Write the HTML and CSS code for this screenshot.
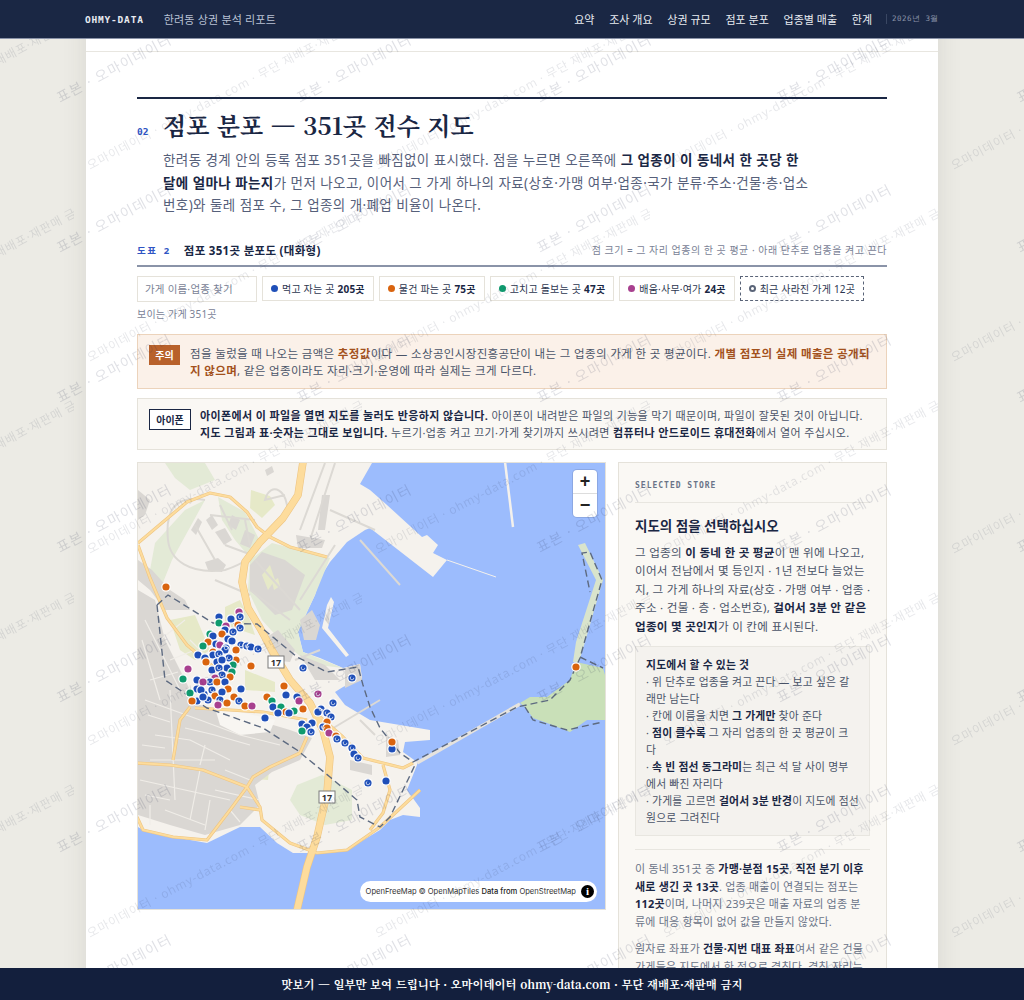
FILE: index.html
```html
<!DOCTYPE html>
<html lang="ko">
<head>
  <meta charset="UTF-8" />
  <meta name="viewport" content="width=device-width, initial-scale=1.0" />
  <title>한려동 상권 분석 리포트</title>
  <link rel="stylesheet" href="styles.css">
</head>
<body>
  <header class="topbar">
    <div class="topbar-left">
      <span class="brand">OHMY-DATA</span>
      <span class="report-name">한려동 상권 분석 리포트</span>
    </div>
    <nav class="topnav">
      <a href="#summary">요약</a>
      <a href="#survey">조사 개요</a>
      <a href="#scale">상권 규모</a>
      <a href="#stores">점포 분포</a>
      <a href="#sales">업종별 매출</a>
      <a href="#limits">한계</a>
      <span class="issue">2026년 3월</span>
    </nav>
  </header>

  <div class="page">
    <div class="prev-section"></div>

    <section id="stores" class="section">
      <div class="section-head">
        <span class="section-no">02</span>
        <h1>점포 분포 — 351곳 전수 지도</h1>
      </div>
      <p class="lead">한려동 경계 안의 등록 점포 351곳을 빠짐없이 표시했다. 점을 누르면 오른쪽에 <b>그 업종이 이 동네서 한 곳당 한 달에 얼마나 파는지</b>가 먼저 나오고, 이어서 그 가게 하나의 자료(상호·가맹 여부·업종·국가 분류·주소·건물·층·업소번호)와 둘레 점포 수, 그 업종의 개·폐업 비율이 나온다.</p>

      <div class="fig-head">
        <div class="fig-title"><span class="fig-no">도표 2</span><strong>점포 351곳 분포도 (대화형)</strong></div>
        <span class="fig-note">점 크기 = 그 자리 업종의 한 곳 평균 · 아래 단추로 업종을 켜고 끈다</span>
      </div>

      <div class="filters">
        <input class="search" type="text" placeholder="가게 이름·업종 찾기" />
        <button class="chip"><i class="dot dot-food"></i>먹고 자는 곳 <b>205곳</b></button>
        <button class="chip"><i class="dot dot-shop"></i>물건 파는 곳 <b>75곳</b></button>
        <button class="chip"><i class="dot dot-care"></i>고치고 돌보는 곳 <b>47곳</b></button>
        <button class="chip"><i class="dot dot-office"></i>배움·사무·여가 <b>24곳</b></button>
        <button class="chip chip-closed"><i class="dot dot-closed"></i>최근 사라진 가게 12곳</button>
      </div>
      <p class="visible-count">보이는 가게 351곳</p>

      <div class="notice notice-warn">
        <span class="badge badge-warn">주의</span>
        <p>점을 눌렀을 때 나오는 금액은 <b>추정값</b>이다 — 소상공인시장진흥공단이 내는 그 업종의 가게 한 곳 평균이다. <b>개별 점포의 실제 매출은 공개되지 않으며</b>, 같은 업종이라도 자리·크기·운영에 따라 실제는 크게 다르다.</p>
      </div>
      <div class="notice notice-phone">
        <span class="badge badge-phone">아이폰</span>
        <p><b>아이폰에서 이 파일을 열면 지도를 눌러도 반응하지 않습니다.</b> 아이폰이 내려받은 파일의 기능을 막기 때문이며, 파일이 잘못된 것이 아닙니다. <b>지도 그림과 표·숫자는 그대로 보입니다.</b> 누르기·업종 켜고 끄기·가게 찾기까지 쓰시려면 <b>컴퓨터나 안드로이드 휴대전화</b>에서 열어 주십시오.</p>
      </div>

      <div class="map-row">
        <div class="map">
          <svg class="map-svg" viewBox="138 463 467 446" preserveAspectRatio="none" aria-hidden="true">
            <rect class="water" x="138" y="463" width="467" height="446" />
            <polygon class="land" points="138,463 372,463 360,484 370,490 387,505 422,537 427,535 438,545 433,553 447,560 433,577 370,528 365,530 347,542 330,562 320,578 315,595 307,612 298,632 303,652 320,658 343,668 360,664 362,678 343,687 335,692 345,705 370,720 430,730 430,740 405,742 403,752 417,762 417,765 407,790 420,808 420,817 403,815 390,820 380,830 347,850 317,853 293,853 277,843 260,827 240,827 207,843 173,837 143,830 138,827" />
            <polygon class="green-pale" points="250,560 272,543 330,558 315,595 307,612 298,632 303,652 343,668 310,664 280,640 262,620 248,590" />
            <polygon class="green-pale" points="155,543 185,510 205,500 172,560 160,590 150,570" />
            <polygon class="green-pale" points="165,463 205,463 215,480 190,490 175,478" />
            <polygon class="green-pale" points="218,497 245,512 262,545 252,560 235,540 222,520" />
            <polygon class="green-pale" points="297,785 322,775 352,790 352,820 325,825 300,815 290,800" />
            <polygon class="green-soft" points="251,490 270,496 275,505 262,518 250,508" />
            <polygon class="green-soft" points="225,607 240,600 250,620 255,635 225,625" />
            <polygon class="green-soft" points="170,620 195,615 210,650 195,660 180,650" />
            <polygon class="green-soft" points="222,740 265,735 272,745 268,780 240,778 225,762" />
            <polygon class="green-soft" points="245,670 275,682 275,692 245,690" />

            <g class="resident">
              <polygon points="138,590 155,600 165,640 190,690 200,705 240,715 290,730 312,738 300,760 272,772 255,785 260,805 240,825 205,835 170,825 138,815" />
              <polygon points="138,490 150,500 145,515 138,520" />
              <polygon points="138,560 152,570 170,590 185,600 190,610 165,610 150,590 138,580" />
              <polygon points="250,565 262,552 285,560 305,575 292,610 275,615 250,590" />
              <polygon points="191,530 198,518 202,522 196,535" />
              <polygon points="206,520 212,515 218,525 212,530" />
              <polygon points="215,532 225,528 232,540 224,545" />
              <polygon points="232,515 240,520 236,530 228,525" />
              <polygon points="245,530 255,535 250,548 240,544" />
              <polygon points="205,562 218,558 226,565 222,572 208,570" />
              <polygon points="262,640 278,630 295,650 290,662 272,660" />
              <polygon points="300,655 325,665 340,680 315,680" />
              <polygon points="345,668 360,664 362,680 345,688" />
              <polygon points="350,760 372,765 372,775 350,770" />
              <polygon points="386,736 398,740 400,755 386,757" />
              <polygon points="265,735 285,735 300,745 296,757 270,765" />
              <polygon points="300,620 312,610 320,625 316,640 304,640" />
              <polygon points="325,530 330,495 322,495 318,530" />
              <polygon points="296,535 325,540 322,548 298,548" />
              <polygon points="265,470 272,466 274,472 267,476" />
            </g>
            <polygon class="green-soft" points="262,575 270,565 275,580 268,590" />
            <polygon class="green-soft" points="272,582 278,578 280,586 274,590" />
            <polygon class="pale-yellow" points="215,708 240,712 275,720 270,732 240,735 220,725" />

            <g class="streets">
              <path d="M145 700 L200 720 L240 735 L280 745 M155 735 L190 740 L230 760 M170 690 L175 800 M150 760 L215 760 M200 770 L190 820 M215 790 L260 800 M140 780 L230 800 M165 810 L205 825" />
              <path d="M145 620 L165 660 L180 690 M160 640 L185 620 M190 640 L210 660 M170 660 L195 650" />
              <path d="M142 640 L160 700 M150 680 L178 672 M148 715 L170 722 M142 745 L165 748 M185 728 L215 735 L250 745 M205 745 L200 765 M145 795 L170 800 M225 770 L250 780 M150 805 L150 825 M210 800 L205 830 M230 810 L240 822" />
            </g>
            <g class="minor-roads">
              <path d="M168 540 C165 510 175 495 205 500 M168 540 C170 560 190 575 225 570 C240 565 260 555 262 540 M210 515 L255 520 M220 505 L232 530 M245 520 L250 545 M225 545 L252 555 M195 525 L215 560 M285 495 L265 500 C270 480 290 490 287 515" />
              <path d="M335 463 L310 540 M325 463 L300 530 M330 510 L375 530 M255 560 L300 610 M250 590 L290 620 M300 600 L335 545 M215 580 L250 595 M295 660 L320 650 M360 540 L400 585" />
              <path d="M330 730 L380 700 M360 720 L375 735" />
            </g>

            <g class="road-casing">
              <path class="road-thin" d="M138 543 L163 522 L187 502 L210 493 L230 497 L247 512 L257 527 L270 537 L290 547 L327 557" />
              <path class="road-thin" d="M138 545 L150 578 L167 618 L187 645 L207 662 L222 672 M190 707 L180 720 L173 760" />
              <path class="road-thin" d="M195 708 L230 710 L263 712 L307 720 M320 717 L343 737 L363 758 L383 763 L403 768 L413 763" />
              <path class="road-thin" d="M137 763 L170 765 L203 770 L247 787 L260 807 L262 820 L290 843 L317 853 L347 850 L380 827 L420 790" />
              <path class="road-thin" d="M247 787 L230 810 L207 840 L173 837 L143 830 L137 817 M307 737 L300 753 L270 767 L253 777 L247 787 M240 807 L260 810 M383 765 L390 790 L383 813 L370 830" />
              <path class="road-wide" d="M303 462 L298 495 L283 518 L260 542 L245 562 L242 582 L248 608 L260 628 L273 652 L290 680 L310 703 L323 730 L330 757 L327 793 L317 837 L307 867 L297 910" />
            </g>
            <g class="road-fill">
              <path class="road-thin" d="M138 543 L163 522 L187 502 L210 493 L230 497 L247 512 L257 527 L270 537 L290 547 L327 557" />
              <path class="road-thin" d="M138 545 L150 578 L167 618 L187 645 L207 662 L222 672 M190 707 L180 720 L173 760" />
              <path class="road-thin" d="M195 708 L230 710 L263 712 L307 720 M320 717 L343 737 L363 758 L383 763 L403 768 L413 763" />
              <path class="road-thin" d="M137 763 L170 765 L203 770 L247 787 L260 807 L262 820 L290 843 L317 853 L347 850 L380 827 L420 790" />
              <path class="road-thin" d="M247 787 L230 810 L207 840 L173 837 L143 830 L137 817 M307 737 L300 753 L270 767 L253 777 L247 787 M240 807 L260 810 M383 765 L390 790 L383 813 L370 830" />
              <path class="road-wide" d="M303 462 L298 495 L283 518 L260 542 L245 562 L242 582 L248 608 L260 628 L273 652 L290 680 L310 703 L323 730 L330 757 L327 793 L317 837 L307 867 L297 910" />
            </g>

            <path class="pier" d="M505 462 L513 527" />
            <path class="pier-thin" d="M447 560 L496 577" />
            <polygon class="land" points="331,597 334,602 328,628 349,655 346,657 322,628 327,605" />
            <polygon class="resident-fill" points="330,605 329,625 325,620" />
            <polygon class="strip" points="578,545 585,543 603,580 585,642 579,662 573,662 576,642 596,580" />
            <polygon class="green-land" points="576,662 603,668 605,675 605,720 587,720 570,732 547,723 533,718 525,707 520,703 530,697 547,697 570,680" />
            <path class="bridge" d="M417 763 L520 704" />

            <path class="boundary" d="M157 605 L168 595 L213 623 L257 624 L297 657 L327 672 L358 667 L363 685 L370 707 L380 728 L400 753 L413 762 L517 707 L550 700 L570 680 L580 658 L590 622 L602 580 L590 552 L582 553 L590 592 M157 605 L165 680 L207 708 L263 728 L297 750 L330 777 L357 800 L360 817 L380 827 L390 817 L403 790 L415 765 M525 707 L533 720 L567 730 L603 722 M580 657 L603 668" />

            <g class="shield"><rect x="268" y="656" width="16" height="12" /><text x="276" y="665.5">17</text></g>
            <g class="shield"><rect x="319" y="791" width="16" height="12" /><text x="327" y="800.5">17</text></g>

            <g class="stores">
              <circle class="s-office" cx="239" cy="612" r="4" /><circle class="s-food" cx="240" cy="617" r="4" />
              <circle class="s-food" cx="219" cy="617" r="4.5" /><circle class="s-care" cx="219" cy="623" r="3.5" /><circle class="s-food" cx="231" cy="619" r="4" />
              <circle class="s-office" cx="226" cy="626" r="4" /><circle class="s-shop" cx="238" cy="625" r="4" /><circle class="s-food" cx="240" cy="628" r="4" />
              <circle class="s-food" cx="225" cy="630" r="4.5" /><circle class="s-food" cx="233" cy="632" r="4" /><circle class="s-care" cx="210" cy="634" r="4.5" />
              <circle class="s-food" cx="213" cy="636" r="4" /><circle class="s-shop" cx="222" cy="634" r="3.5" /><circle class="s-food" cx="228" cy="639" r="4" /><circle class="s-shop" cx="208" cy="642" r="4.5" />
              <circle class="s-food" cx="232" cy="641" r="4.5" /><circle class="s-food" cx="216" cy="644" r="4" /><circle class="s-office" cx="220" cy="645" r="4.5" /><circle class="s-food" cx="241" cy="645" r="4" />
              <circle class="s-food" cx="247" cy="646" r="4" /><circle class="s-food" cx="251" cy="647" r="4" /><circle class="s-food" cx="258" cy="649" r="4" />
              <circle class="s-care" cx="203" cy="646" r="4" /><circle class="s-food" cx="226" cy="648" r="4" /><circle class="s-shop" cx="236" cy="650" r="4.5" /><circle class="s-shop" cx="213" cy="652" r="4" />
              <circle class="s-food" cx="198" cy="655" r="4.5" /><circle class="s-food" cx="213" cy="655" r="4" /><circle class="s-food" cx="225" cy="650" r="4" /><circle class="s-food" cx="205" cy="658" r="4" /><circle class="s-food" cx="219" cy="654" r="4" />
              <circle class="s-shop" cx="236" cy="660" r="4" /><circle class="s-food" cx="229" cy="658" r="4" /><circle class="s-food" cx="217" cy="662" r="4" /><circle class="s-care" cx="233" cy="665" r="4" />
              <circle class="s-shop" cx="251" cy="666" r="4.5" /><circle class="s-food" cx="227" cy="668" r="4.5" /><circle class="s-food" cx="212" cy="670" r="4" /><circle class="s-food" cx="219" cy="668" r="4" />
              <circle class="s-shop" cx="206" cy="662" r="3.5" /><circle class="s-food" cx="222" cy="660" r="4" /><circle class="s-office" cx="188" cy="669" r="4" />
              <circle class="s-care" cx="232" cy="672" r="4" /><circle class="s-shop" cx="230" cy="677" r="4" /><circle class="s-food" cx="222" cy="675" r="4" /><circle class="s-office" cx="215" cy="678" r="4" />
              <circle class="s-care" cx="183" cy="679" r="4" /><circle class="s-food" cx="197" cy="680" r="4.5" /><circle class="s-food" cx="210" cy="682" r="4" />
              <circle class="s-shop" cx="217" cy="682" r="4" /><circle class="s-office" cx="203" cy="682" r="3.5" /><circle class="s-food" cx="225" cy="682" r="4" />
              <circle class="s-shop" cx="228" cy="689" r="4.5" /><circle class="s-food" cx="241" cy="689" r="4" /><circle class="s-food" cx="212" cy="690" r="4" />
              <circle class="s-food" cx="197" cy="689" r="4" /><circle class="s-care" cx="190" cy="693" r="4" /><circle class="s-food" cx="204" cy="694" r="4" />
              <circle class="s-shop" cx="234" cy="697" r="4.5" /><circle class="s-shop" cx="215" cy="696" r="4" /><circle class="s-food" cx="222" cy="692" r="3.5" /><circle class="s-food" cx="201" cy="690" r="4" />
              <circle class="s-food" cx="197" cy="701" r="4.5" /><circle class="s-food" cx="208" cy="700" r="4" /><circle class="s-food" cx="220" cy="700" r="4" /><circle class="s-food" cx="203" cy="697" r="4" />
              <circle class="s-food" cx="239" cy="701" r="4" /><circle class="s-shop" cx="227" cy="703" r="4.5" /><circle class="s-shop" cx="192" cy="701" r="3.5" />
              <circle class="s-office" cx="218" cy="705" r="4" /><circle class="s-shop" cx="245" cy="706" r="4.5" /><circle class="s-office" cx="252" cy="706" r="4" />
              <circle class="s-shop" cx="166" cy="587" r="4" /><circle class="s-food" cx="303" cy="668" r="4" /><circle class="s-food" cx="352" cy="678" r="4" />
              <circle class="s-shop" cx="284" cy="686" r="4" /><circle class="s-food" cx="286" cy="695" r="4" /><circle class="s-food" cx="297" cy="697" r="4" />
              <circle class="s-shop" cx="267" cy="697" r="4" /><circle class="s-care" cx="272" cy="701" r="4" /><circle class="s-office" cx="299" cy="701" r="4" />
              <circle class="s-office" cx="318" cy="694" r="4" /><circle class="s-food" cx="333" cy="703" r="3.5" /><circle class="s-food" cx="273" cy="707" r="4" />
              <circle class="s-care" cx="281" cy="707" r="4" /><circle class="s-shop" cx="286" cy="712" r="4" /><circle class="s-care" cx="294" cy="711" r="4" />
              <circle class="s-food" cx="289" cy="713" r="4" /><circle class="s-shop" cx="303" cy="709" r="4" /><circle class="s-food" cx="278" cy="713" r="3.5" />
              <circle class="s-food" cx="265" cy="718" r="4" /><circle class="s-food" cx="321" cy="709" r="4" /><circle class="s-food" cx="318" cy="712" r="4" />
              <circle class="s-food" cx="327" cy="713" r="4" /><circle class="s-food" cx="331" cy="717" r="3.5" /><circle class="s-shop" cx="327" cy="722" r="4" />
              <circle class="s-food" cx="302" cy="724" r="4" /><circle class="s-food" cx="312" cy="723" r="4" /><circle class="s-food" cx="307" cy="727" r="4" />
              <circle class="s-food" cx="323" cy="727" r="4" /><circle class="s-shop" cx="327" cy="728" r="4" /><circle class="s-care" cx="302" cy="731" r="3.5" />
              <circle class="s-food" cx="311" cy="732" r="4" /><circle class="s-office" cx="329" cy="733" r="4" /><circle class="s-shop" cx="336" cy="736" r="4" />
              <circle class="s-food" cx="337" cy="739" r="4" /><circle class="s-food" cx="345" cy="743" r="4" /><circle class="s-food" cx="352" cy="748" r="4" />
              <circle class="s-food" cx="354" cy="754" r="4" /><circle class="s-food" cx="358" cy="758" r="4" /><circle class="s-food" cx="368" cy="783" r="4" />
              <circle class="s-food" cx="392" cy="749" r="4" /><circle class="s-shop" cx="392" cy="742" r="4" /><circle class="s-food" cx="386" cy="781" r="4" />
              <circle class="s-shop" cx="576" cy="667" r="4" />
            </g>
            <!-- places that hold several stores -->
            <g class="stacks">
              <circle cx="240" cy="617" r="1.8" /><circle cx="240" cy="628" r="1.8" /><circle cx="233" cy="632" r="1.8" /><circle cx="241" cy="645" r="1.8" />
              <circle cx="247" cy="646" r="1.8" /><circle cx="258" cy="649" r="1.8" /><circle cx="226" cy="648" r="1.8" /><circle cx="219" cy="654" r="1.8" />
              <circle cx="229" cy="658" r="1.8" /><circle cx="219" cy="668" r="1.8" /><circle cx="222" cy="675" r="1.8" /><circle cx="210" cy="682" r="1.8" />
              <circle cx="212" cy="690" r="1.8" /><circle cx="220" cy="700" r="1.8" /><circle cx="208" cy="700" r="1.8" /><circle cx="239" cy="701" r="1.8" />
              <circle cx="303" cy="668" r="1.8" /><circle cx="352" cy="678" r="1.8" /><circle cx="333" cy="703" r="1.8" /><circle cx="311" cy="732" r="1.8" />
              <circle cx="321" cy="709" r="1.8" /><circle cx="327" cy="713" r="1.8" /><circle cx="331" cy="717" r="1.8" /><circle cx="323" cy="727" r="1.8" />
              <circle cx="337" cy="739" r="1.8" /><circle cx="345" cy="743" r="1.8" /><circle cx="352" cy="748" r="1.8" /><circle cx="358" cy="758" r="1.8" />
              <circle cx="368" cy="783" r="1.8" /><circle cx="318" cy="694" r="1.8" />
            </g>
          </svg>

          <div class="zoom-ctrl">
            <button class="zoom-btn">+</button>
            <button class="zoom-btn">−</button>
          </div>
          <div class="attribution">
            <span>OpenFreeMap © OpenMapTiles <b>Data from</b> OpenStreetMap</span>
            <i class="attr-info">i</i>
          </div>
        </div>

        <aside class="side">
          <div class="side-label">SELECTED STORE</div>
          <h3>지도의 점을 선택하십시오</h3>
          <p class="side-intro">그 업종의 <b>이 동네 한 곳 평균</b>이 맨 위에 나오고, 이어서 전남에서 몇 등인지 · 1년 전보다 늘었는<br>지, 그 가게 하나의 자료(상호 · 가맹 여부 · 업종 · 주소 · 건물 · 층 · 업소번호), <b>걸어서 3분 안 같은 업종이 몇 곳인지</b>가 이 칸에 표시된다.</p>
          <div class="howto">
            <b>지도에서 할 수 있는 것</b><br>
            · 위 단추로 업종을 켜고 끈다 — 보고 싶은 갈래만 남는다<br>
            · 칸에 이름을 치면 <b>그 가게만</b> 찾아 준다<br>
            · <b>점이 클수록</b> 그 자리 업종의 한 곳 평균이 크<br>다<br>
            · <b>속 빈 점선 동그라미</b>는 최근 석 달 사이 명부<br>에서 빠진 자리다<br>
            · 가게를 고르면 <b>걸어서 3분 반경</b>이 지도에 점선 원으로 그려진다
          </div>
          <div class="side-rule"></div>
          <p class="side-note">이 동네 351곳 중 <b>가맹·분점 15곳</b>, <b>직전 분기 이후 새로 생긴 곳 13곳</b>. 업종 매출이 연결되는 점포는 <b>112곳</b>이며, 나머지 239곳은 매출 자료의 업종 분류에 대응 항목이 없어 값을 만들지 않았다.</p>
          <p class="side-note">원자료 좌표가 <b>건물·지번 대표 좌표</b>여서 같은 건물 가게들은 지도에서 한 점으로 겹친다. 겹친 자리는 확대하면 나뉜다.</p>
        </aside>
      </div>
    </section>
  </div>

  <!-- watermark over the page, under the bars -->
  <svg class="watermark" width="1024" height="1000" aria-hidden="true">
    <defs>
      <pattern id="wmLarge" width="240" height="150" patternUnits="userSpaceOnUse">
        <text class="wm-large" transform="translate(60 103) rotate(-28)">표본 · 오마이데이터</text>
      </pattern>
      <pattern id="wmSmall" x="74" y="10" width="288" height="192" patternUnits="userSpaceOnUse">
        <text class="wm-small" transform="translate(16 160) rotate(-28)">오마이데이터 · ohmy-data.com · 무단 재배포·재판매 금지</text>
      </pattern>
    </defs>
    <rect width="1024" height="1000" fill="url(#wmSmall)" />
    <rect width="1024" height="1000" fill="url(#wmLarge)" />
  </svg>

  <footer class="preview-bar">맛보기 — 일부만 보여 드립니다 · 오마이데이터 ohmy-data.com · 무단 재배포·재판매 금지</footer>
</body>
</html>
```

FILE: styles.css
```css
* {
  box-sizing: border-box;
}
html, body {
  height: 100vh;
  overflow: hidden;
}
body {
  margin: 0;
  background: #ecebe5;
  color: #4a5468;
  font-family: "Noto Sans", "Noto Sans CJK KR", sans-serif;
  font-size: 12px;
}
b, strong {
  color: #1a2744;
  font-weight: 700;
}

/* top bar */
.topbar {
  position: fixed;
  top: 0;
  left: 0;
  right: 0;
  z-index: 30;
  height: 39px;
  padding: 0 85px;
  display: flex;
  justify-content: space-between;
  align-items: center;
  background: #1a2744;
  border-bottom: 1px solid #8a93a8;
}
.topbar-left {
  display: flex;
  align-items: center;
  gap: 20px;
}
.brand {
  font-family: "DejaVu Sans Mono", monospace;
  font-size: 9.5px;
  font-weight: 700;
  letter-spacing: 0.8px;
  color: #e8ebf1;
}
.report-name {
  font-size: 11px;
  letter-spacing: 0.2px;
  color: #b9c2d4;
}
.topnav {
  display: flex;
  align-items: center;
  gap: 14.8px;
}
.topnav a {
  font-size: 11px;
  color: #e8ebf1;
  text-decoration: none;
}
.issue {
  margin-left: -1px;
  padding-left: 5px;
  border-left: 1px solid #3a4763;
  font-family: "DejaVu Sans Mono", monospace;
  font-size: 7.5px;
  letter-spacing: 0.5px;
  color: #8a93a8;
}

/* page sheet */
.page {
  width: 852px;
  height: 1000px;
  margin: 0 auto;
  padding-top: 38px;
  background: #fff;
  box-shadow: 0 0 24px rgba(60, 55, 40, 0.1);
}
.prev-section {
  height: 14px;
  border-bottom: 1px solid #e8e6e0;
}
.section {
  padding: 45px 51px 0;
}
.section-head {
  display: flex;
  align-items: baseline;
  gap: 14.5px;
  padding-top: 9px;
  border-top: 2px solid #1a2744;
}
.section-no {
  font-family: "DejaVu Sans Mono", monospace;
  font-size: 9.5px;
  font-weight: 700;
  color: #2f55c4;
}
h1 {
  margin: 0;
  font-family: "Noto Serif CJK KR", "Noto Serif KR", "Liberation Serif", serif;
  font-size: 24px;
  line-height: 34px;
  font-weight: 700;
  color: #1a2744;
}
.lead {
  margin: 7px 0 0 26px;
  max-width: 647px;
  font-size: 13.5px;
  line-height: 22.5px;
  letter-spacing: 0.4px;
  word-spacing: 0.15px;
  color: #56607a;
}

/* figure */
.fig-head {
  margin-top: 25px;
  padding-bottom: 7px;
  display: flex;
  justify-content: space-between;
  align-items: center;
  border-bottom: 2px solid #8a93a8;
}
.fig-title {
  display: flex;
  align-items: center;
  gap: 13px;
}
.fig-title strong {
  font-size: 11.5px;
  letter-spacing: 0.3px;
}
.fig-no {
  font-size: 9.5px;
  font-weight: 700;
  letter-spacing: 1.6px;
  word-spacing: 2px;
  color: #2f55c4;
}
.fig-note {
  font-size: 10px;
  letter-spacing: 0.5px;
  color: #7a8296;
}
.filters {
  margin-top: 9px;
  display: flex;
  align-items: center;
  gap: 5px;
}
.search {
  width: 120px;
  height: 26px;
  padding: 0 7px;
  border: 1px solid #e5e2da;
  font-family: inherit;
  font-size: 10.5px;
  letter-spacing: 0.2px;
}
.search::placeholder {
  color: #7a8296;
}
.chip {
  height: 25px;
  padding: 0 8px;
  display: flex;
  align-items: center;
  gap: 3px;
  background: #fff;
  border: 1px solid #e5e2da;
  font-family: inherit;
  font-size: 10px;
  letter-spacing: 0.2px;
  color: #2c3650;
}
.chip-closed {
  border: 1px dashed #5a6478;
}
.dot {
  width: 7px;
  height: 7px;
  border-radius: 50%;
  margin-right: 1px;
}
.dot-food { background: #1f4fb8; }
.dot-shop { background: #d9640f; }
.dot-care { background: #0f9a6e; }
.dot-office { background: #a8408f; }
.dot-closed { border: 2px solid #5a6478; }
.visible-count {
  margin: 5px 0 0;
  font-size: 10px;
  line-height: 14px;
  letter-spacing: 0.2px;
  color: #7a8296;
}

/* notices */
.notice {
  display: flex;
  align-items: flex-start;
  border: 1px solid #e5e2da;
}
.notice p {
  margin: 0;
  line-height: 17px;
}
.notice-warn {
  margin-top: 13px;
  padding: 10px 11px 9px;
  gap: 10px;
  background: #fbf1e9;
  border-color: #ecd3bb;
}
.notice-warn p {
  font-size: 11.5px;
  letter-spacing: 0.35px;
}
.notice-warn b {
  color: #a3511d;
}
.notice-phone {
  margin-top: 9px;
  padding: 8px 12px 8px 11px;
  gap: 9px;
  background: #faf8f4;
}
.notice-phone p {
  font-size: 11px;
  letter-spacing: 0.37px;
}
.badge {
  flex: none;
  display: flex;
  align-items: center;
  justify-content: center;
  font-size: 10px;
  font-weight: 700;
}
.badge-warn {
  width: 31px;
  height: 20px;
  background: #b8612b;
  color: #fff;
}
.badge-phone {
  width: 42px;
  height: 21px;
  margin-top: 2px;
  background: #fff;
  border: 1px solid #1a2744;
  color: #1a2744;
}

/* map */
.map-row {
  margin-top: 12px;
  display: grid;
  grid-template-columns: 469px 269px;
  gap: 12px;
  align-items: start;
}
.map {
  position: relative;
  height: 448px;
  border: 1px solid #e5e2da;
}
.map-svg {
  display: block;
  width: 100%;
  height: 100%;
}
.water { fill: #9cbcfd; }
.land { fill: #f5f2ed; }
.green-pale { fill: #e3ead6; }
.green-soft { fill: #e6e9c8; }
.pale-yellow { fill: #f8f6f2; }
.resident { fill: #dad7d3; }
.resident-fill { fill: #dad7d3; }
.strip { fill: #d9e4cc; }
.green-land { fill: #c9e0b8; }
.streets path {
  fill: none;
  stroke: #f0ede8;
  stroke-width: 1.2;
}
.minor-roads path {
  fill: none;
  stroke: #dcd9d4;
  stroke-width: 2;
}
.road-casing path, .road-fill path {
  fill: none;
  stroke-linejoin: round;
}
.road-casing path { stroke: #eec583; }
.road-fill path { stroke: #fddc9c; }
.road-casing .road-thin { stroke-width: 3.2; }
.road-fill .road-thin { stroke-width: 2; }
.road-casing .road-wide { stroke-width: 7.6; }
.road-fill .road-wide { stroke-width: 6.4; }
.pier {
  fill: none;
  stroke: #f4f1ec;
  stroke-width: 2.5;
}
.pier-thin {
  fill: none;
  stroke: #f4f1ec;
  stroke-width: 1;
}
.bridge {
  fill: none;
  stroke: #e6e3de;
  stroke-width: 3.5;
}
.boundary {
  fill: none;
  stroke: #5d6a80;
  stroke-width: 1.4;
  stroke-dasharray: 7 4;
}
.shield rect {
  fill: #fff;
  stroke: #7b7b7b;
  stroke-width: 1;
}
.shield text {
  font-family: "Noto Sans", sans-serif;
  font-size: 9px;
  font-weight: 700;
  fill: #333;
  text-anchor: middle;
}
.stores circle {
  r: 4.2px;
  stroke: #fff;
  stroke-width: 1.2;
}
.s-food { fill: #1f4fb8; }
.s-shop { fill: #d9640f; }
.s-care { fill: #0f9a6e; }
.s-office { fill: #a8408f; }
.stacks circle {
  fill: none;
  stroke: #dfe6f5;
  stroke-width: 0.8;
  stroke-dasharray: 7 3;
}

.zoom-ctrl {
  position: absolute;
  top: 7px;
  right: 8px;
  width: 24px;
  display: flex;
  flex-direction: column;
  background: #fff;
  border-radius: 4px;
  box-shadow: 0 0 0 1px rgba(0, 0, 0, 0.1);
}
.zoom-btn {
  height: 23.5px;
  padding: 0;
  border: 0;
  background: none;
  font-family: "Liberation Sans", sans-serif;
  font-size: 18px;
  line-height: 20px;
  font-weight: 700;
  color: #222;
}
.zoom-btn + .zoom-btn {
  border-top: 1px solid #ddd;
}
.attribution {
  position: absolute;
  right: 8px;
  bottom: 7px;
  height: 21px;
  padding: 0 3px 0 6px;
  display: flex;
  align-items: center;
  gap: 5px;
  background: #fff;
  border-radius: 11px;
  font-family: "Inter", "Liberation Sans", sans-serif;
  font-size: 7.6px;
  color: #333;
}
.attribution b {
  color: #222;
  font-weight: 500;
}
.attr-info {
  width: 13px;
  height: 13px;
  border-radius: 50%;
  background: #000;
  color: #fff;
  display: flex;
  align-items: center;
  justify-content: center;
  font-family: "Liberation Serif", serif;
  font-size: 11px;
  font-weight: 700;
  font-style: normal;
}

/* right column */
.side {
  padding: 18px 16px;
  background: #faf8f4;
  border: 1px solid #e5e2da;
}
.side-label {
  padding-bottom: 12px;
  border-bottom: 1px solid #e8e6e0;
  font-family: "DejaVu Sans Mono", monospace;
  font-size: 8px;
  font-weight: 700;
  letter-spacing: 1px;
  color: #6a7488;
}
.side h3 {
  margin: 13px 0 0;
  font-size: 13.5px;
  line-height: 20px;
  font-weight: 700;
  color: #1a2744;
}
.side p {
  margin: 8px 0 0;
  font-size: 11.6px;
  line-height: 18.5px;
  letter-spacing: 0.25px;
}
.side .side-intro {
  margin-right: -2px;
}
.howto {
  margin-top: 10px;
  padding: 9px 10px;
  background: #f4f2ee;
  border: 1px solid #e8e6e0;
  font-size: 10.8px;
  line-height: 17px;
  letter-spacing: 0.2px;
}
.side-rule {
  margin-top: 13px;
  border-top: 1px solid #e8e6e0;
}
.side .side-note {
  margin-top: 10px;
  font-size: 11px;
  line-height: 17.5px;
  letter-spacing: 0.2px;
  color: #6a7488;
}

/* watermark and bottom bar */
.watermark {
  position: fixed;
  top: 0;
  left: 0;
  z-index: 20;
  pointer-events: none;
}
.wm-large {
  font-size: 14px;
  letter-spacing: 1.3px;
  fill: #1a2744;
  fill-opacity: 0.14;
}
.wm-small {
  font-size: 12px;
  letter-spacing: 0.8px;
  fill: #1a2744;
  fill-opacity: 0.11;
}
.preview-bar {
  position: fixed;
  left: 0;
  right: 0;
  bottom: 0;
  z-index: 30;
  height: 32px;
  display: flex;
  align-items: center;
  justify-content: center;
  background: #131f3d;
  color: #fff;
  font-family: "Noto Serif CJK KR", "Liberation Serif", serif;
  font-size: 11.4px;
  font-weight: 700;
}
```
